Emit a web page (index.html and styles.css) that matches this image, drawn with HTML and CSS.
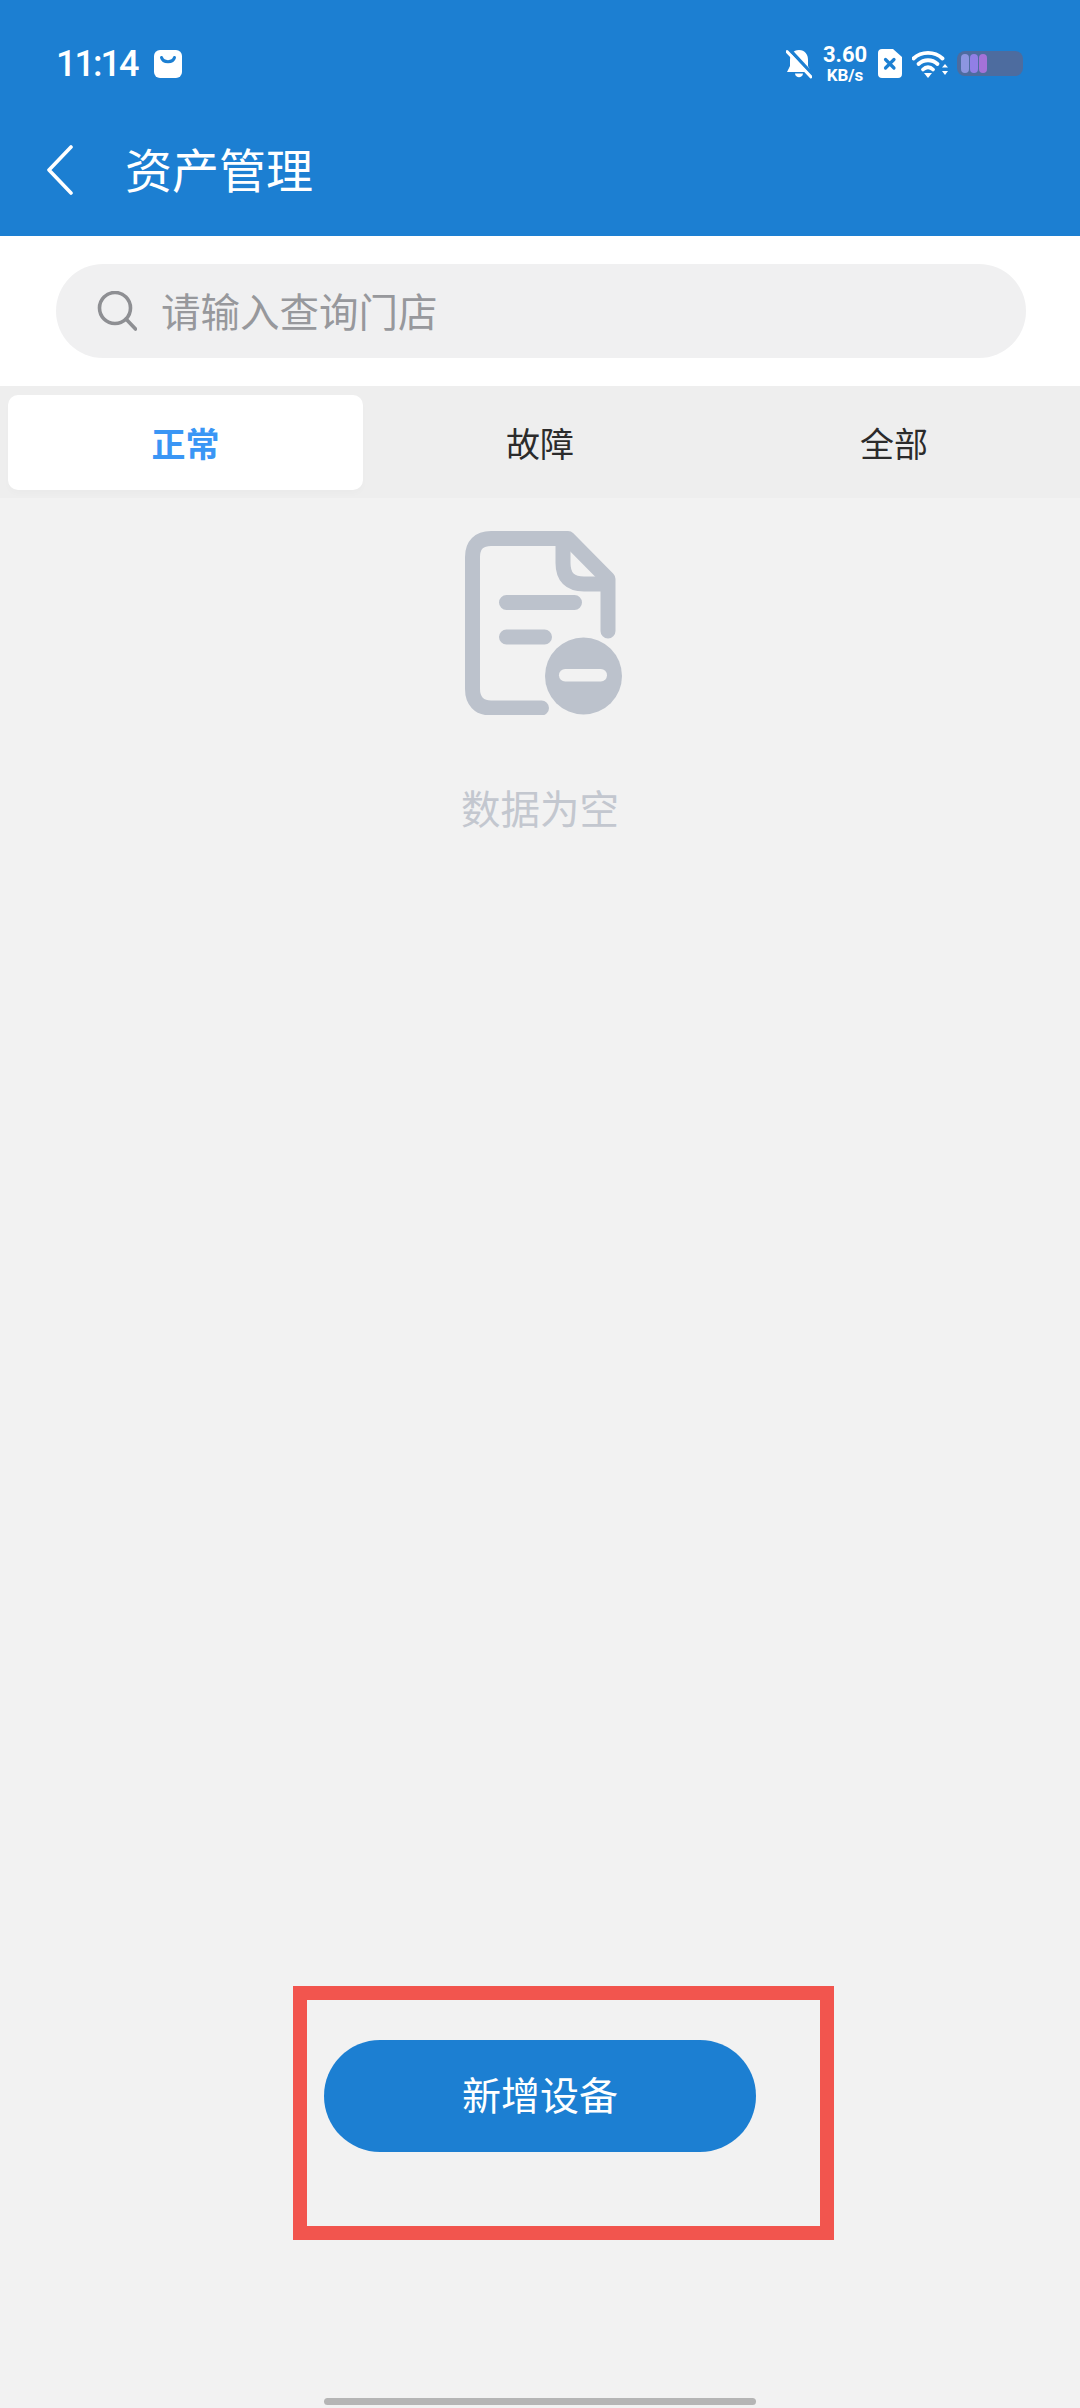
FILE: index.html
```html
<!DOCTYPE html>
<html lang="zh-CN">
<head>
    <meta charset="UTF-8">
    <meta name="viewport" content="width=device-width, initial-scale=1.0">
    <title>资产管理</title>
    <link rel="stylesheet" href="styles.css">
</head>
<body>
    <div class="app">
        <header class="header">
            <div class="status-bar">
                <div class="status-left">
                    <span class="time">11:14</span>
                    <svg class="bag-icon" width="28" height="28" viewBox="0 0 28 28">
                        <rect width="28" height="28" rx="6" fill="#fff"/>
                        <path d="M7.500 7.500C9 13 19 13 20.500 7.500" fill="none" stroke="#1c7fd2" stroke-width="3" stroke-linecap="round"/>
                    </svg>
                </div>
                <div class="status-right">
                    <svg class="bell-icon" width="26" height="30" viewBox="0 0 26 30">
                        <path d="M13 1C7 1 4 5.500 4 11V17L1 23H25L22 17V11C22 5.500 19 1 13 1Z" fill="#fff"/>
                        <path d="M9 24.500C9.500 29.500 16.500 29.500 17 24.500Z" fill="#fff"/>
                        <path d="M3 0L28 27" stroke="#1c7fd2" stroke-width="3.500"/>
                        <path d="M1 2.500L25 28" stroke="#fff" stroke-width="3" stroke-linecap="round"/>
                    </svg>
                    <div class="net-speed">
                        <span class="speed-value">3.60</span>
                        <span class="speed-unit">KB/s</span>
                    </div>
                    <svg class="sim-icon" width="24" height="29" viewBox="0 0 24 29">
                        <path d="M4 0H15L24 8V25C24 27.500 22.500 29 20 29H4C1.500 29 0 27.500 0 25V4C0 1.500 1.500 0 4 0Z" fill="#fff"/>
                        <path d="M7.500 10.500L16 19M16 10.500L7.500 19" stroke="#1c7fd2" stroke-width="3.200" stroke-linecap="round"/>
                    </svg>
                    <svg class="wifi-icon" width="36" height="28" viewBox="0 0 36 28">
                        <path d="M1.500 8.500C9.500 1 22.500 1 30.500 8.500" fill="none" stroke="#fff" stroke-width="3.800" stroke-linecap="round"/>
                        <path d="M6.500 14C12 9 20 9 25.500 14" fill="none" stroke="#fff" stroke-width="3.800" stroke-linecap="round"/>
                        <path d="M11 19.500C14 16.500 18 16.500 21 19.500" fill="none" stroke="#fff" stroke-width="3.800" stroke-linecap="round"/>
                        <path d="M12 23H20L16 28Z" fill="#fff"/>
                        <path d="M30 17.500L33 14L36 17.500ZM30 21H36L33 25Z" fill="#fff"/>
                    </svg>
                    <div class="battery">
                        <span class="battery-cell cell-one"></span>
                        <span class="battery-cell cell-two"></span>
                        <span class="battery-cell cell-three"></span>
                    </div>
                </div>
            </div>
            <div class="title-bar">
                <svg class="back-icon" width="28" height="50" viewBox="0 0 28 50">
                    <path d="M25 2L3 25L25 48" fill="none" stroke="#fff" stroke-width="3.600" stroke-linecap="round" stroke-linejoin="round"/>
                </svg>
                <h1 class="page-title">资产管理</h1>
            </div>
        </header>

        <section class="search-section">
            <div class="search-box">
                <svg width="40" height="40" viewBox="0 0 40 40">
                    <circle cx="18" cy="17" r="15.500" fill="none" stroke="#8e8f93" stroke-width="3.600"/>
                    <path d="M29 28L38.500 38" stroke="#8e8f93" stroke-width="3.600" stroke-linecap="round"/>
                </svg>
                <span class="search-placeholder">请输入查询门店</span>
            </div>
        </section>

        <nav class="tabs">
            <div class="tab active">正常</div>
            <div class="tab">故障</div>
            <div class="tab">全部</div>
        </nav>

        <main class="empty-state">
            <svg class="empty-icon" width="157" height="184" viewBox="0 0 157 184">
                <path d="M76.500 177H26C14 177 7.500 170 7.500 158V26C7.500 14 14 7.500 26 7.500H103L143 48V100" fill="none" stroke="#bcc2cc" stroke-width="15" stroke-linecap="round" stroke-linejoin="round"/>
                <path d="M98 8V32C98 46 105 53 119 53H143" fill="none" stroke="#bcc2cc" stroke-width="15" stroke-linejoin="round"/>
                <path d="M41.500 71.500H109.500M41.500 106H79.500" stroke="#bcc2cc" stroke-width="15" stroke-linecap="round"/>
                <circle cx="118.500" cy="145" r="38.500" fill="#bcc2cc"/>
                <rect x="94" y="138" width="48" height="12.500" rx="6.200" fill="#f2f2f2"/>
            </svg>
            <p class="empty-text">数据为空</p>
        </main>

        <div class="footer">
            <button class="add-btn">新增设备</button>
        </div>
        <div class="home-bar"></div>

        <!-- red mark on top of the screenshot -->
        <div class="highlight-box"></div>
    </div>
</body>
</html>
```

FILE: styles.css
```css
/* General Styles */
* {
    margin: 0;
    padding: 0;
    box-sizing: border-box;
}

body {
    width: 1080px;
    height: 2408px;
    overflow: hidden;
    font-family: "Noto Sans CJK SC", "Noto Sans", sans-serif;
}

.app {
    position: relative;
    display: flex;
    flex-direction: column;
    height: 2408px;
    background-color: #f2f2f2;
}

/* Header */
.header {
    height: 236px;
    background-color: #1c7fd2;
    color: #fff;
}

.status-bar {
    display: flex;
    align-items: center;
    justify-content: space-between;
    height: 104px;
    padding: 23px 57px 0 56px;
}

.status-left {
    display: flex;
    align-items: center;
    gap: 16px;
}

.time {
    width: 82px;
    font-family: Roboto, sans-serif;
    font-size: 36px;
    font-weight: 500;
    line-height: 1;
    letter-spacing: -2px;
}

.status-right {
    display: flex;
    align-items: center;
}

.net-speed {
    display: flex;
    flex-direction: column;
    align-items: center;
    width: 48px;
    margin: 0 9px;
    font-family: Roboto, sans-serif;
    font-weight: 700;
}

.speed-value {
    font-size: 22px;
    line-height: 22px;
}

.speed-unit {
    font-size: 17px;
    line-height: 18px;
}

.wifi-icon {
    margin-left: 10px;
}

.battery {
    display: flex;
    gap: 1px;
    width: 66px;
    height: 25px;
    margin-left: 9px;
    padding: 3px 4px;
    border-radius: 8px;
    background-color: #4d6c9f;
}

.battery-cell {
    width: 8px;
    border-radius: 4px;
}

.cell-one {
    background-color: #8c96e0;
}

.cell-two {
    background-color: #917fe6;
}

.cell-three {
    background-color: #a472d8;
}

.title-bar {
    display: flex;
    align-items: center;
    height: 132px;
    padding-left: 46px;
}

.page-title {
    margin-left: 51px;
    padding-bottom: 6px;
    font-size: 47px;
    font-weight: 400;
    line-height: 1;
}

/* Search */
.search-section {
    height: 150px;
    padding: 28px 54px 28px 56px;
    background-color: #fff;
}

.search-box {
    display: flex;
    align-items: center;
    gap: 24px;
    height: 94px;
    padding-left: 41px;
    border-radius: 47px;
    background-color: #f0f0f1;
}

.search-placeholder {
    padding-bottom: 2px;
    font-size: 39.5px;
    line-height: 1;
    color: #97989c;
}

/* Tabs */
.tabs {
    display: grid;
    grid-template-columns: 355px 354px 354px;
    height: 112px;
    padding: 9px 0 8px 8px;
    background-color: #eeeeee;
}

.tab {
    display: flex;
    align-items: center;
    justify-content: center;
    border-radius: 10px;
    font-size: 34px;
    color: #2b2b2b;
}

.tab.active {
    background-color: #fff;
    box-shadow: 0 4px 6px rgba(0, 0, 0, 0.015);
    font-weight: 700;
    color: #3a96f5;
}

/* Empty state */
.empty-state {
    display: flex;
    flex-direction: column;
    align-items: center;
    padding-top: 33px;
}

.empty-icon {
    margin-left: 7px;
}

.empty-text {
    margin-top: 64px;
    font-size: 39.5px;
    line-height: 56px;
    color: #c3c7cf;
}

/* Bottom button */
.footer {
    display: flex;
    justify-content: center;
    margin-top: auto;
    margin-bottom: 246px;
}

.add-btn {
    width: 432px;
    height: 112px;
    padding-bottom: 6px;
    border: none;
    border-radius: 56px;
    background-color: #1c7fd2;
    color: #fff;
    font-family: inherit;
    font-size: 39px;
}

.home-bar {
    align-self: center;
    width: 432px;
    height: 7px;
    margin-bottom: 3px;
    border-radius: 4px;
    background-color: #b5b5b5;
}

.highlight-box {
    position: absolute;
    left: 293px;
    top: 1986px;
    width: 541px;
    height: 254px;
    border: 14px solid #f2554e;
}
```
